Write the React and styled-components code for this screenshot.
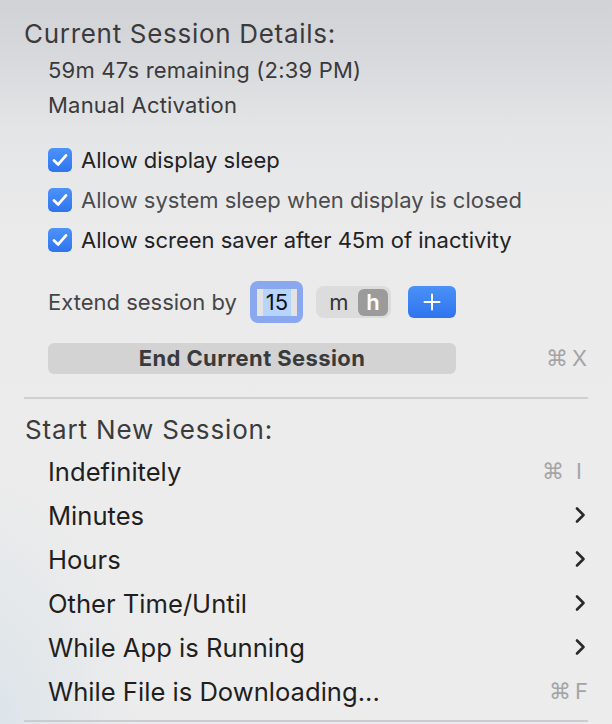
import React from "react";
import styled, { createGlobalStyle } from "styled-components";

const Global = createGlobalStyle`
  html, body { margin: 0; padding: 0; }
  body {
    width: 612px;
    height: 724px;
    overflow: hidden;
    font-family: Inter, "Noto Sans", "DejaVu Sans", sans-serif;
  }
`;

const Menu = styled.div`
  position: relative;
  width: 612px;
  height: 724px;
  box-sizing: border-box;
  padding-top: 14px;
  overflow: hidden;
  background:
    radial-gradient(ellipse 260px 420px at -40px 760px, rgba(205, 220, 232, 0.65), rgba(205, 220, 232, 0) 70%),
    linear-gradient(180deg, #d0d2d5 0%, #d8d9dc 8%, #e4e5e6 18%, #eaeaeb 30%, #ececec 60%, #ececec 100%);
  display: flex;
  flex-direction: column;
`;

const SectionTitle = styled.div`
  height: ${(p) => p.$h || 38}px;
  margin-top: ${(p) => p.$mt || 0}px;
  padding-left: ${(p) => p.$pl || 24}px;
  display: flex;
  align-items: center;
  font-size: 26px;
  color: #3b3b3d;
  letter-spacing: ${(p) => p.$ls || 0.7}px;
`;

const Detail = styled.div`
  height: 35px;
  padding-left: 48px;
  display: flex;
  align-items: center;
  font-size: 22px;
  letter-spacing: 0.2px;
  color: #3a3a3c;
`;

const CheckList = styled.div`
  margin-top: 18px;
  display: flex;
  flex-direction: column;
`;

const CheckRow = styled.div`
  height: 40px;
  padding-left: 48px;
  display: flex;
  align-items: center;
  gap: 9px;
  font-size: 22px;
  color: ${(p) => (p.$muted ? "#4c4c4e" : "#222224")};
`;

const Box = styled.span`
  width: 24px;
  height: 24px;
  border-radius: 5px;
  background: linear-gradient(180deg, #4d93f9 0%, #2f74ee 100%);
  display: flex;
  align-items: center;
  justify-content: center;
  flex-shrink: 0;
`;

const ExtendRow = styled.div`
  height: 44px;
  margin-top: 20px;
  padding-left: 48px;
  display: flex;
  align-items: center;
  font-size: 22px;
  color: #454547;
`;

const ExtendLabel = styled.span`
  margin-right: 13px;
`;

const FocusRing = styled.span`
  width: 53px;
  height: 42px;
  box-sizing: border-box;
  border-radius: 8px;
  background: #8aa8f0;
  padding: 8px 6px 7px 7px;
  display: flex;
`;

const Field = styled.span`
  flex: 1;
  background: #e3e3e3;
  display: flex;
  align-items: center;
  justify-content: center;
`;

const Selected = styled.span`
  background: #b6d4fc;
  color: #111;
  font-size: 22px;
  line-height: 27px;
  padding: 0 3px;
`;

const Segmented = styled.span`
  margin-left: 13px;
  width: 75px;
  height: 32px;
  box-sizing: border-box;
  border-radius: 8px;
  background: #dcdcdd;
  display: flex;
  align-items: center;
  padding: 0 3px 0 8px;
  gap: 4px;
`;

const Seg = styled.span`
  flex: ${(p) => (p.$active ? "0 0 30px" : "1")};
  height: 27px;
  border-radius: 6px;
  display: flex;
  align-items: center;
  justify-content: center;
  font-size: 22px;
  color: ${(p) => (p.$active ? "#ffffff" : "#333335")};
  background: ${(p) => (p.$active ? "#9b9b9b" : "transparent")};
  font-weight: ${(p) => (p.$active ? 600 : 400)};
`;

const PlusButton = styled.span`
  margin-left: 17px;
  width: 48px;
  height: 32px;
  border-radius: 6px;
  background: linear-gradient(180deg, #4b91f8 0%, #2e74ee 100%);
  display: flex;
  align-items: center;
  justify-content: center;
`;

const EndRow = styled.div`
  margin-top: 18px;
  height: 32px;
  padding: 0 25px 0 48px;
  display: flex;
  align-items: center;
  justify-content: space-between;
`;

const EndButton = styled.div`
  width: 408px;
  height: 31px;
  border-radius: 6px;
  background: #d3d3d4;
  display: flex;
  align-items: center;
  justify-content: center;
  font-size: 22px;
  letter-spacing: 0.4px;
  font-weight: 700;
  color: #3a3a3c;
`;

const Shortcut = styled.span`
  display: flex;
  align-items: center;
  gap: ${(p) => p.$gap || 4}px;
  font-size: 22px;
  color: #a4a4a6;
  font-family: "DejaVu Sans", Inter, sans-serif;
`;

const Key = styled.span`
  font-family: Inter, "Noto Sans", sans-serif;
`;

const Separator = styled.div`
  margin: ${(p) => p.$mt || 0}px 24px 0 24px;
  height: 2px;
  background: ${(p) => p.$color || "#d0d0d1"};
  flex-shrink: 0;
`;

const Items = styled.div`
  margin-top: 1px;
  display: flex;
  flex-direction: column;
`;

const Item = styled.div`
  height: 44px;
  padding: 0 ${(p) => p.$pr || 26}px 0 48px;
  display: flex;
  align-items: center;
  justify-content: space-between;
  font-size: 25.6px;
  color: #1f1f21;
`;

const Check = () => (
  <svg width="16" height="14" viewBox="0 0 16 14">
    <path d="M2 7.4 L6.2 11.4 L14 2.4" fill="none" stroke="#fff" strokeWidth="2.8" strokeLinecap="round" strokeLinejoin="round" />
  </svg>
);

const Plus = () => (
  <svg width="18" height="18" viewBox="0 0 18 18">
    <path d="M9 1.5 V16.5 M1.5 9 H16.5" stroke="#fff" strokeWidth="2" strokeLinecap="round" />
  </svg>
);

const Chevron = () => (
  <svg width="12" height="18" viewBox="0 0 12 18">
    <path d="M3 2.5 L9.5 9 L3 15.5" fill="none" stroke="#2a2a2c" strokeWidth="2.6" strokeLinecap="round" strokeLinejoin="round" />
  </svg>
);

const items = [
  { label: "Indefinitely", key: "I", gap: 12, pr: 30 },
  { label: "Minutes", sub: true },
  { label: "Hours", sub: true },
  { label: "Other Time/Until", sub: true },
  { label: "While App is Running", sub: true },
  { label: "While File is Downloading...", key: "F", gap: 4, pr: 24 },
];

export default function App() {
  return (
    <>
      <Global />
      <Menu>
        <SectionTitle>Current Session Details:</SectionTitle>
        <Detail>59m 47s remaining (2:39 PM)</Detail>
        <Detail>Manual Activation</Detail>
        <CheckList>
          <CheckRow><Box><Check /></Box>Allow display sleep</CheckRow>
          <CheckRow $muted><Box><Check /></Box>Allow system sleep when display is closed</CheckRow>
          <CheckRow><Box><Check /></Box>Allow screen saver after 45m of inactivity</CheckRow>
        </CheckList>
        <ExtendRow>
          <ExtendLabel>Extend session by</ExtendLabel>
          <FocusRing><Field><Selected>15</Selected></Field></FocusRing>
          <Segmented>
            <Seg>m</Seg>
            <Seg $active>h</Seg>
          </Segmented>
          <PlusButton><Plus /></PlusButton>
        </ExtendRow>
        <EndRow>
          <EndButton>End Current Session</EndButton>
          <Shortcut $gap={4}>⌘<Key>X</Key></Shortcut>
        </EndRow>
        <Separator $mt={23} />
        <SectionTitle $mt={11} $pl={25} $ls={0.85}>Start New Session:</SectionTitle>
        <Items>
          {items.map((it) => (
            <Item key={it.label} $pr={it.sub ? 26 : it.pr}>
              <span>{it.label}</span>
              {it.sub ? <Chevron /> : <Shortcut $gap={it.gap}>⌘<Key>{it.key}</Key></Shortcut>}
            </Item>
          ))}
        </Items>
        <Separator $mt={7} $color="#c9cdd1" />
      </Menu>
    </>
  );
}
